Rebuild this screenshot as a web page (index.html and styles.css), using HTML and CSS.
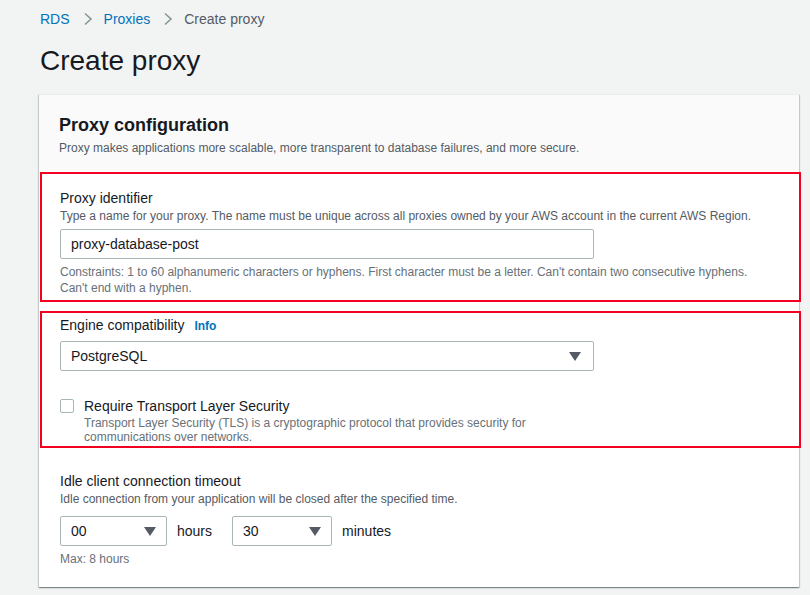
FILE: index.html
```html
<!DOCTYPE html>
<html>
<head>
<meta charset="utf-8">
<link rel="stylesheet" href="styles.css">
</head>
<body>
<nav class="crumbs">
  <a class="crumb-link">RDS</a>
  <svg class="chev" width="10" height="14" viewBox="0 0 10 14"><path d="M2 1.5 L8 7 L2 12.5" fill="none" stroke="#879596" stroke-width="1.6"/></svg>
  <a class="crumb-link">Proxies</a>
  <svg class="chev" width="10" height="14" viewBox="0 0 10 14"><path d="M2 1.5 L8 7 L2 12.5" fill="none" stroke="#879596" stroke-width="1.6"/></svg>
  <span class="crumb-current">Create proxy</span>
</nav>
<h1 class="page-title">Create proxy</h1>

<section class="card">
  <header class="card-head">
    <h2 class="card-title">Proxy configuration</h2>
    <p class="card-desc">Proxy makes applications more scalable, more transparent to database failures, and more secure.</p>
  </header>

  <div class="field hl hl-first">
    <div class="label">Proxy identifier</div>
    <div class="desc">Type a name for your proxy. The name must be unique across all proxies owned by your AWS account in the current AWS Region.</div>
    <div class="input wide">proxy-database-post</div>
    <div class="hint">Constraints: 1 to 60 alphanumeric characters or hyphens. First character must be a letter. Can't contain two consecutive hyphens.<br>Can't end with a hyphen.</div>
  </div>

  <div class="field hl hl-second">
    <div class="label">Engine compatibility <span class="info">Info</span></div>
    <div class="input wide select">PostgreSQL<span class="caret"></span></div>
    <div class="check-row">
      <span class="checkbox"></span>
      <div>
        <div class="check-label">Require Transport Layer Security</div>
        <div class="check-desc">Transport Layer Security (TLS) is a cryptographic protocol that provides security for<br>communications over networks.</div>
      </div>
    </div>
  </div>

  <div class="field idle">
    <div class="label">Idle client connection timeout</div>
    <div class="desc">Idle connection from your application will be closed after the specified time.</div>
    <div class="time-row">
      <div class="input select sel-h">00<span class="caret"></span></div>
      <span class="unit unit-h">hours</span>
      <div class="input select sel-m">30<span class="caret"></span></div>
      <span class="unit">minutes</span>
    </div>
    <div class="hint">Max: 8 hours</div>
  </div>
</section>
</body>
</html>
```

FILE: styles.css
```css
* { box-sizing: border-box; }
html, body { margin: 0; padding: 0; }
body {
  background: #f2f3f3;
  font-family: "Liberation Sans", Arial, sans-serif;
  color: #16191f;
  width: 810px;
  height: 595px;
  overflow: hidden;
}
.crumbs {
  display: flex;
  align-items: center;
  height: 20px;
  margin: 9px 0 0 40px;
  font-size: 14px;
}
.crumb-link { color: #0073bb; }
.chev { margin: 0 11px 0 13px; }
.crumb-current { color: #545b64; }
.page-title {
  margin: 14px 0 0 40px;
  font-size: 28px;
  font-weight: 400;
  line-height: 36px;
  color: #16191f;
}
.card {
  margin: 15px 0 0 39px;
  width: 760px;
  background: #fff;
  border-top: 1px solid #eaeded;
  box-shadow: 0 1px 1px 0 rgba(0,28,36,.3), 1px 1px 1px 0 rgba(0,28,36,.15), -1px 1px 1px 0 rgba(0,28,36,.15);
  padding-bottom: 20px;
}
.card-head {
  background: #fafafa;
  padding: 19px 20px 15px 20px;
  margin-bottom: 1px;
}
.card-title {
  margin: 0;
  font-size: 18px;
  line-height: 22px;
  font-weight: 700;
}
.card-desc {
  margin: 4px 0 0 0;
  font-size: 12px;
  line-height: 16px;
  color: #545b64;
}
.field { padding-left: 21px; }
.hl {
  border: 2px solid #f2001f;
  margin: 0 -2px 0 1px;
  padding-left: 18px;
}
.hl-first { padding-top: 14px; padding-bottom: 4px; }
.hl-second { margin-top: 9px; padding-top: 2px; padding-bottom: 2px; }
.label {
  font-size: 14px;
  line-height: 20px;
  color: #16191f;
}
.info {
  color: #0073bb;
  font-weight: 700;
  font-size: 12px;
  margin-left: 6px;
}
.desc {
  font-size: 12px;
  line-height: 16px;
  color: #545b64;
}
.input {
  position: relative;
  height: 30px;
  border: 1px solid #aab7b8;
  border-radius: 2px;
  background: #fff;
  font-size: 14px;
  line-height: 28px;
  padding-left: 10px;
  color: #16191f;
}
.wide { width: 534px; margin-top: 5px; }
.hl-first .input { margin-top: 5px; }
.caret {
  position: absolute;
  right: 12px;
  top: 10px;
  width: 0; height: 0;
  border-left: 6px solid transparent;
  border-right: 6px solid transparent;
  border-top: 9px solid #545b64;
}
.hint {
  margin-top: 5px;
  font-size: 12px;
  line-height: 16px;
  color: #687078;
}
.check-row {
  display: flex;
  align-items: flex-start;
  margin-top: 25px;
}
.checkbox {
  width: 14px; height: 14px;
  border: 1px solid #aab7b8;
  border-radius: 2px;
  background: #fff;
  margin-top: 3px;
  margin-right: 10px;
  flex: none;
}
.check-label { font-size: 14px; line-height: 20px; }
.check-desc { font-size: 12px; line-height: 14px; color: #687078; }
.idle { padding-top: 23px; }
.time-row {
  display: flex;
  align-items: center;
  margin-top: 9px;
}
.sel-h { width: 107px; }
.sel-m { width: 100px; }
.sel-h .caret, .sel-m .caret { right: 10px; }
.unit { font-size: 14px; margin-left: 10px; }
.unit-h { margin-right: 20px; }
.idle .hint { margin-top: 5px; }
```
